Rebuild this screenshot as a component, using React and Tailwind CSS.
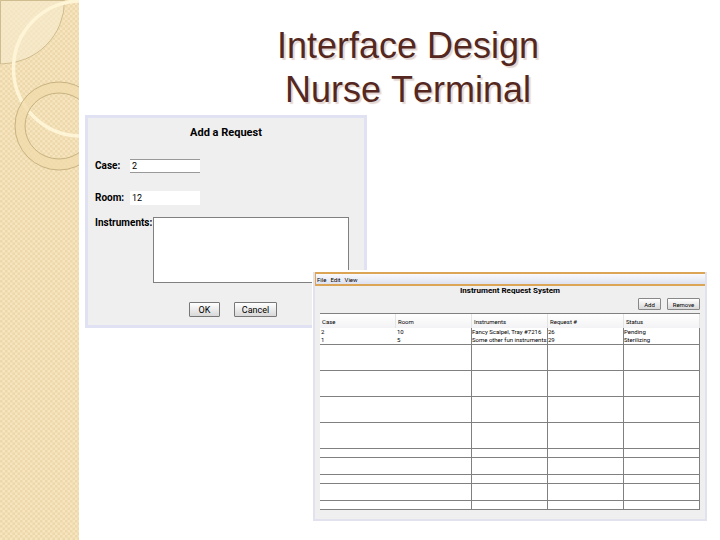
import React from "react";

const blankRows = [26, 26, 26, 26, 9, 17, 9, 17, 9];
const headings = ["Case", "Room", "Instruments", "Request #", "Status"];
const requests = [
  ["2", "10", "Fancy Scalpel, Tray #7216", "26", "Pending"],
  ["1", "5", "Some other fun instruments", "29", "Sterilizing"],
];

function Sidebar() {
  return (
    <aside className="w-[79px] shrink-0 overflow-hidden bg-[#f2deb1]">
      <svg className="block h-full w-full" aria-hidden="true">
        <defs>
          <pattern id="weave" width="5" height="5" patternUnits="userSpaceOnUse">
            <rect width="5" height="5" fill="#f6e5bf" />
            <rect width="2.5" height="2.5" fill="#ecd8ab" />
            <rect x="2.5" y="2.5" width="2.5" height="2.5" fill="#ecd8ab" />
          </pattern>
        </defs>
        <rect width="100%" height="100%" fill="url(#weave)" />
        <path d="M.5.5H64.500A64 63 0 0 1 .5 64Z" fill="#f8ecd2" fillOpacity=".6" stroke="#d0bd8f" />
        <circle cx="81" cy="68.500" r="67.500" fill="none" stroke="#fef4d6" strokeWidth="3.500" />
        <path fillRule="evenodd" d="M15 126a44 44 0 1 0 88 0a44 44 0 1 0-88 0ZM25 126a34 33 0 1 0 68 0a34 33 0 1 0-68 0Z" fill="#f0dbab" fillOpacity=".75" stroke="#c8b280" />
      </svg>
    </aside>
  );
}

function RequestDialog() {
  return (
    <form className="absolute top-[115px] left-[6px] h-[213px] w-[282px] border-3 border-[#e0e1f2] bg-[#efefef] px-[7px] pt-2 text-[10px] leading-[14px] text-black">
      <h2 className="text-center text-[11px] leading-[14px] font-bold">Add a Request</h2>
      <div className="mt-[19px] flex items-center">
        <label htmlFor="case" className="w-[35px] font-bold">Case:</label>
        <input id="case" defaultValue="2" className="h-[14px] w-[70px] border-y border-[#999] bg-white px-[2px] text-[9px]" />
      </div>
      <div className="mt-[18px] flex items-center">
        <label htmlFor="room" className="w-[35px] font-bold">Room:</label>
        <input id="room" defaultValue="12" className="h-[14px] w-[70px] bg-white px-[2px] text-[9px]" />
      </div>
      <div className="mt-[12px] flex">
        <label htmlFor="instruments" className="w-[58px] leading-[12px] font-bold whitespace-nowrap">Instruments:</label>
        <textarea id="instruments" className="block h-[66px] w-[196px] resize-none border border-[#808080] bg-white" />
      </div>
      <div className="mt-[19px] flex gap-[14px] pl-[94px]">
        <button type="button" className="h-[15px] w-[31px] rounded-[1px] border border-[#777] bg-linear-to-b from-white to-[#d8d8d8] text-[9px] leading-[12px]">OK</button>
        <button type="button" className="h-[15px] w-[43px] rounded-[1px] border border-[#777] bg-linear-to-b from-white to-[#d8d8d8] text-[9px] leading-[12px]">Cancel</button>
      </div>
    </form>
  );
}

function SystemWindow() {
  return (
    <section className="absolute top-[270px] left-[233px] w-[395px] border-t-2 border-l border-white bg-white text-[6px] leading-[9px] text-black">
      <div className="border-x-2 border-b-2 border-[#e2e2ee] bg-[#efefef]">
        <nav className="flex h-[14px] items-center gap-1 border-t-2 border-b-2 border-l border-[#dca455] bg-linear-to-b from-white to-[#d9dded] bg-origin-border pl-px">
          <button type="button">File</button>
          <button type="button">Edit</button>
          <button type="button">View</button>
        </nav>
        <h2 className="text-center text-[8px] leading-[10px] font-bold">Instrument Request System</h2>
        <div className="mt-[2px] flex justify-end gap-[6px] pr-[5px]">
          <button type="button" className="h-[12px] w-[23px] rounded-[1px] border border-[#888] bg-linear-to-b from-white to-[#d8d8d8]">Add</button>
          <button type="button" className="h-[12px] w-[33px] rounded-[1px] border border-[#888] bg-linear-to-b from-white to-[#d8d8d8]">Remove</button>
        </div>
        <div className="mt-[3px] mb-[9px] px-[5px]">
          <table className="w-full table-fixed border-separate border-spacing-0 border-t border-[#808080] bg-white text-left">
            <thead>
              <tr className="h-[14px]">
                {headings.map((h) => (
                  <th key={h} className="border-r border-[#e4e4e4] bg-linear-to-b from-white to-[#f3f3f5] p-0 pl-[2px] font-normal">{h}</th>
                ))}
              </tr>
            </thead>
            <tbody>
              {requests.map((row, r) => (
                <tr key={row[0]} className={r === 1 ? "h-[9px] [&>td]:border-b" : "h-[8px]"}>
                  {row.map((cell, c) => (
                    <td key={c} className={`border-[#808080] p-0 leading-[8px] whitespace-nowrap ${c > 0 ? "border-r" : ""} ${c < 2 ? "pl-px" : ""}`}>{cell}</td>
                  ))}
                </tr>
              ))}
              {blankRows.map((height, r) => (
                <tr key={r} style={{ height }}>
                  <td colSpan="2" className="border-r border-b border-[#808080] p-0" />
                  <td className="border-r border-b border-[#808080] p-0" />
                  <td className="border-r border-b border-[#808080] p-0" />
                  <td className="border-r border-b border-[#808080] p-0" />
                </tr>
              ))}
            </tbody>
          </table>
        </div>
      </div>
    </section>
  );
}

export default function App() {
  return (
    <div className="flex min-h-screen bg-white">
      <Sidebar />
      <main className="relative min-w-0 flex-1 font-[Roboto,sans-serif]">
        <h1 className="pt-6 pl-[17px] text-center font-['Liberation_Sans',Arial,sans-serif] text-[36px] leading-[44px] text-[#542820] [font-kerning:none] [text-shadow:2px_2px_1px_#e3d6d2]">
          Interface Design<br />Nurse Terminal
        </h1>
        <RequestDialog />
        <SystemWindow />
      </main>
    </div>
  );
}
